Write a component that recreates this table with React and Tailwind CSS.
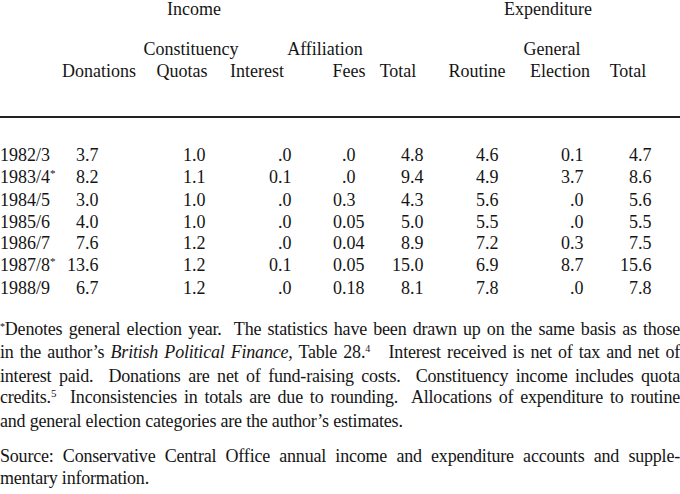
const rows = [
  { year: "1982/3", star: false, vals: ["3.7", "1.0", ".0", ".0", "4.8", "4.6", "0.1", "4.7"] },
  { year: "1983/4", star: true, vals: ["8.2", "1.1", "0.1", ".0", "9.4", "4.9", "3.7", "8.6"] },
  { year: "1984/5", star: false, vals: ["3.0", "1.0", ".0", "0.3", "4.3", "5.6", ".0", "5.6"] },
  { year: "1985/6", star: false, vals: ["4.0", "1.0", ".0", "0.05", "5.0", "5.5", ".0", "5.5"] },
  { year: "1986/7", star: false, vals: ["7.6", "1.2", ".0", "0.04", "8.9", "7.2", "0.3", "7.5"] },
  { year: "1987/8", star: true, vals: ["13.6", "1.2", "0.1", "0.05", "15.0", "6.9", "8.7", "15.6"] },
  { year: "1988/9", star: false, vals: ["6.7", "1.2", ".0", "0.18", "8.1", "7.8", ".0", "7.8"] },
];

// decimal-aligned number: integer part right-aligned in a fixed box
function Num({ value }) {
  const [whole, frac] = value.split(".");
  return (
    <div className="whitespace-nowrap">
      <span className="inline-block w-[30px] text-right">{whole}</span>.{frac}
    </div>
  );
}

function Line({ children, last = false }) {
  return (
    <div className={last ? "whitespace-nowrap" : "text-justify [text-align-last:justify] whitespace-nowrap"}>
      {children}
    </div>
  );
}

export default function App() {
  return (
    <div className="w-[680px] h-[494px] overflow-hidden bg-white text-[#151515] font-['Liberation_Serif',serif]">
      {/* headings */}
      <div className="text-[18px] pt-[1px]">
        <div className="flex leading-[16px]">
          <div className="ml-[144px] w-[100px] text-center">Income</div>
          <div className="ml-[244px] w-[120px] text-center">Expenditure</div>
        </div>
        <div className="flex leading-[22px] mt-[21px]">
          <div className="ml-[136px] w-[110px] text-center">Constituency</div>
          <div className="ml-[34px] w-[90px] text-center">Affiliation</div>
          <div className="ml-[142px] w-[80px] text-center">General</div>
        </div>
        <div className="flex leading-[22px]">
          <div className="ml-[62px] w-[70px] text-center">Donations</div>
          <div className="ml-[15px] w-[70px] text-center">Quotas</div>
          <div className="ml-[5px] w-[70px] text-center">Interest</div>
          <div className="ml-[32px] w-[50px] text-center">Fees</div>
          <div className="ml-[4px] w-[40px] text-center">Total</div>
          <div className="ml-[24px] w-[70px] text-center">Routine</div>
          <div className="ml-[13px] w-[70px] text-center">Election</div>
          <div className="ml-[8px] w-[50px] text-center">Total</div>
        </div>
      </div>

      <div className="mt-[34px] h-[2px] bg-[#222]" />

      {/* data */}
      <div className="mt-[27px] grid grid-cols-[55px_107px_86px_64px_68px_75px_85px_68px_72px] text-[18px] leading-[21.5px]">
        {rows.map((r) => (
          <div key={r.year} className="contents">
            <div className="whitespace-nowrap">
              {r.year}
              {r.star && <span className="relative -top-[6px] text-[11px]">*</span>}
            </div>
            {r.vals.map((v, i) => (
              <Num key={i} value={v} />
            ))}
          </div>
        ))}
      </div>

      {/* notes */}
      <div className="mt-[19px] text-[18px] tracking-[-0.2px] leading-[21.5px]">
        <Line>
          <span className="relative -top-[5px] text-[10px]">*</span>Denotes general election year.&nbsp; The statistics have been drawn up on the same basis as those
        </Line>
        <Line>
          in the author’s <i>British Political Finance,</i> Table 28.<span className="relative -top-[6px] text-[10px]">4</span>&nbsp;&nbsp; Interest received is net of tax and net of
        </Line>
        <Line>
          interest paid.&nbsp; Donations are net of fund-raising costs.&nbsp; Constituency income includes quota
        </Line>
        <Line>
          credits.<span className="relative -top-[6px] text-[11px]">5</span>&nbsp; Inconsistencies in totals are due to rounding.&nbsp; Allocations of expenditure to routine
        </Line>
        <Line last>and general election categories are the author’s estimates.</Line>
      </div>

      <div className="mt-[14px] text-[18px] tracking-[-0.2px] leading-[21.5px]">
        <Line>
          Source: Conservative Central Office annual income and expenditure accounts and supple-
        </Line>
        <Line last>mentary information.</Line>
      </div>
    </div>
  );
}
